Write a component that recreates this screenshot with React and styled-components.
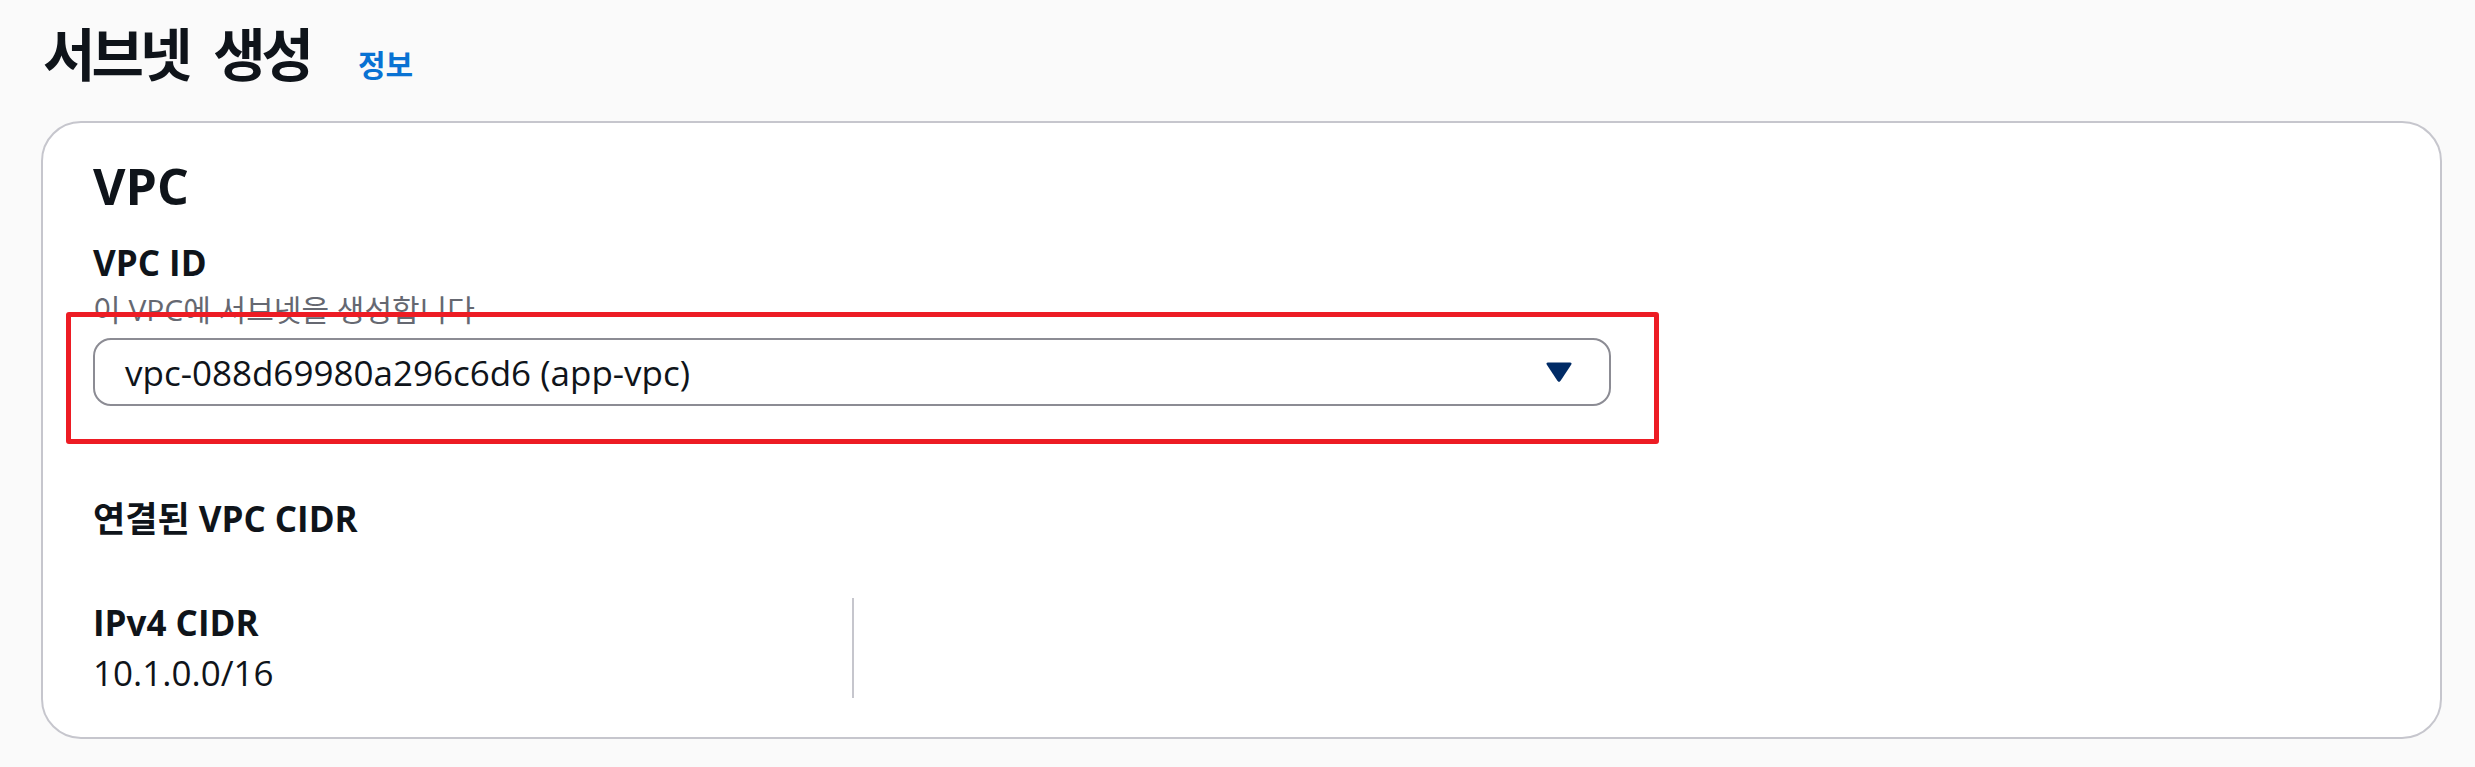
import React from "react";
import styled, { createGlobalStyle } from "styled-components";

const GlobalStyle = createGlobalStyle`
  html, body {
    margin: 0;
    padding: 0;
    background-color: #fafafa;
  }
  body {
    font-family: "Open Sans", "Noto Sans CJK KR", sans-serif;
    color: #0f141a;
  }
`;

const Page = styled.div`
  padding: 17px 33px 20px 41px;
`;

const Header = styled.div`
  display: flex;
  align-items: baseline;
  gap: 48px;
  padding-left: 2px;
  margin-bottom: 29px;
`;

const Title = styled.h1`
  margin: 0;
  font-size: 57px;
  line-height: 75px;
  font-weight: 700;
  letter-spacing: -4px;
  word-spacing: 14px;
`;

const InfoLink = styled.a`
  font-size: 30px;
  font-weight: 700;
  color: #0972d3;
  text-decoration: none;
  cursor: pointer;
`;

const Card = styled.section`
  background-color: #ffffff;
  border: 2px solid #c6c6cd;
  border-radius: 40px;
  padding: 33px 50px 39px 50px;
`;

const SectionTitle = styled.h2`
  margin: 0 0 19px;
  font-size: 50px;
  line-height: 60px;
  font-weight: 700;
`;

const Label = styled.div`
  font-size: ${(p) => p.$size || 35}px;
  line-height: ${(p) => p.$lh || 55}px;
  font-weight: 700;
`;

const Description = styled.div`
  font-size: 30px;
  line-height: 40px;
  color: #656871;
  margin-bottom: 8px;
`;

const SelectWrap = styled.div`
  position: relative;
  width: 1518px;
`;

const Select = styled.div`
  box-sizing: border-box;
  height: 68px;
  border: 2px solid #8c8c94;
  border-radius: 18px;
  padding: 0 36px 0 30px;
  display: flex;
  align-items: center;
  justify-content: space-between;
  font-size: 35px;
  background: #ffffff;
`;

const Highlight = styled.div`
  position: absolute;
  top: -26px;
  left: -27px;
  right: -48px;
  bottom: -38px;
  border: 5px solid #ed1c24;
  border-radius: 3px;
  pointer-events: none;
`;

const SubHeading = styled(Label)`
  margin-top: 85px;
  margin-bottom: 52px;
`;

const Columns = styled.div`
  display: flex;
`;

const Column = styled.div`
  box-sizing: border-box;
  width: 761px;
  border-right: 2px solid #c6c6cd;
`;

const Value = styled.div`
  font-size: 35px;
  line-height: 50px;
`;

const Caret = () => (
  <svg width="28" height="22" viewBox="0 0 28 22">
    <path
      d="M3 1.5 H25 Q27.5 1.5 26 4 L15.6 19.8 Q14 22 12.4 19.8 L2 4 Q0.5 1.5 3 1.5 Z"
      fill="#002b66"
    />
  </svg>
);

export default function App() {
  return (
    <>
      <GlobalStyle />
      <Page>
        <Header>
          <Title>서브넷 생성</Title>
          <InfoLink>정보</InfoLink>
        </Header>
        <Card>
          <SectionTitle>VPC</SectionTitle>
          <Label>VPC ID</Label>
          <Description>이 VPC에 서브넷을 생성합니다</Description>
          <SelectWrap>
            <Select>
              <span>vpc-088d69980a296c6d6 (app-vpc)</span>
              <Caret />
            </Select>
            <Highlight />
          </SelectWrap>
          <SubHeading>연결된 VPC CIDR</SubHeading>
          <Columns>
            <Column>
              <Label $lh={50}>IPv4 CIDR</Label>
              <Value>10.1.0.0/16</Value>
            </Column>
          </Columns>
        </Card>
      </Page>
    </>
  );
}
